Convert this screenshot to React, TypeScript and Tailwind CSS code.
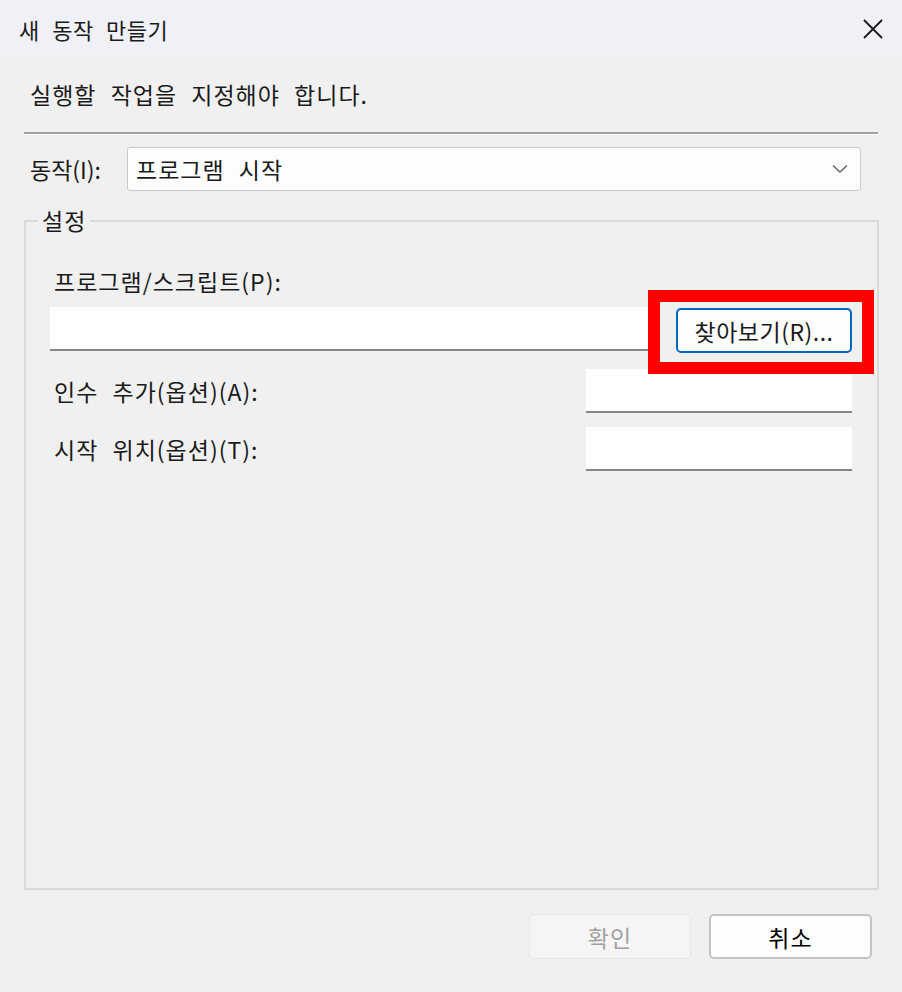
import React from "react";

const font = { fontFamily: '"Noto Sans CJK KR", "Noto Sans", sans-serif' };

export default function App() {
  return (
    <div
      className="w-[902px] h-[992px] bg-[#f0f0f0] flex flex-col text-[23px] leading-[30px] tracking-[1px] text-[#1a1a1a] overflow-hidden [word-spacing:8px]"
      style={font}
    >
      {/* Title bar */}
      <div className="h-[57px] bg-[#eff1f7] flex items-center justify-between pl-[19px] pr-[17px] shrink-0">
        <span className="text-[22px] tracking-[0.5px] [word-spacing:7px] text-[#1b1b1b]">새 동작 만들기</span>
        <svg width="24" height="24" viewBox="0 0 24 24" className="text-[#1a1a1a]">
          <path d="M3 3 L21 21 M21 3 L3 21" stroke="currentColor" strokeWidth="1.8" fill="none" />
        </svg>
      </div>

      {/* Body */}
      <div className="flex flex-col px-[24px] pr-[23px]">
        <div className="mt-[22px] pl-[6px]">실행할 작업을 지정해야 합니다.</div>

        <div className="mt-[23px] h-[2px] bg-[#a0a0a0] mr-[1px]" />
        <div className="h-[1px] bg-white mr-[1px]" />

        <div className="mt-[12px] flex items-center">
          <span className="w-[103px] pl-[6px] shrink-0 tracking-[0px] [word-spacing:0px]">동작(I):</span>
          <div className="w-[734px] h-[44px] bg-[#fdfdfd] border border-[#c9c9c9] rounded-[3px] flex items-center justify-between pl-[8px] pr-[12px]">
            <span>프로그램 시작</span>
            <svg width="16" height="10" viewBox="0 0 16 10">
              <path d="M1 1.5 L8 8 L15 1.5" stroke="#606060" strokeWidth="1.4" fill="none" />
            </svg>
          </div>
        </div>

        {/* Group box */}
        <div className="relative mt-[29px] h-[670px] border-2 border-[#dadada] flex flex-col pl-[24px] pr-[25px]">
          <span className="absolute left-[12px] top-[-17px] px-[4px] bg-[#f0f0f0]">설정</span>

          <div className="mt-[44px] pl-[4px]">프로그램/스크립트(P):</div>

          <div className="mt-[11px] flex items-start">
            <div className="w-[605px] h-[44px] bg-white border-b-2 border-[#868686]" />
            <div className="relative ml-[21px] mt-[1px]">
              <div className="w-[176px] h-[45px] bg-[#fdfdfd] border-2 border-[#0067c0] rounded-[5px] flex items-center justify-center tracking-[0.5px] [word-spacing:0px]">
                찾아보기(R)...
              </div>
              <div className="absolute left-[-28px] right-[-22px] top-[-18px] bottom-[-21px] border-[12px] border-[#ff0000]" />
            </div>
          </div>

          <div className="mt-[16px] flex items-center justify-between">
            <span className="pl-[4px]">인수 추가(옵션)(A):</span>
            <div className="w-[266px] h-[44px] bg-white border-b-2 border-[#868686]" />
          </div>

          <div className="mt-[14px] flex items-center justify-between">
            <span className="pl-[4px]">시작 위치(옵션)(T):</span>
            <div className="w-[266px] h-[44px] bg-white border-b-2 border-[#868686]" />
          </div>
        </div>

        {/* Bottom buttons */}
        <div className="mt-[24px] flex justify-end gap-[18px] pr-[7px]">
          <div className="w-[162px] h-[45px] bg-[#f5f5f5] border border-[#e5e5e5] rounded-[5px] flex items-center justify-center text-[#a0a0a0]">
            확인
          </div>
          <div className="w-[163px] h-[45px] bg-[#fdfdfd] border-2 border-[#c4c4c4] rounded-[5px] flex items-center justify-center text-black">
            취소
          </div>
        </div>
      </div>
    </div>
  );
}
